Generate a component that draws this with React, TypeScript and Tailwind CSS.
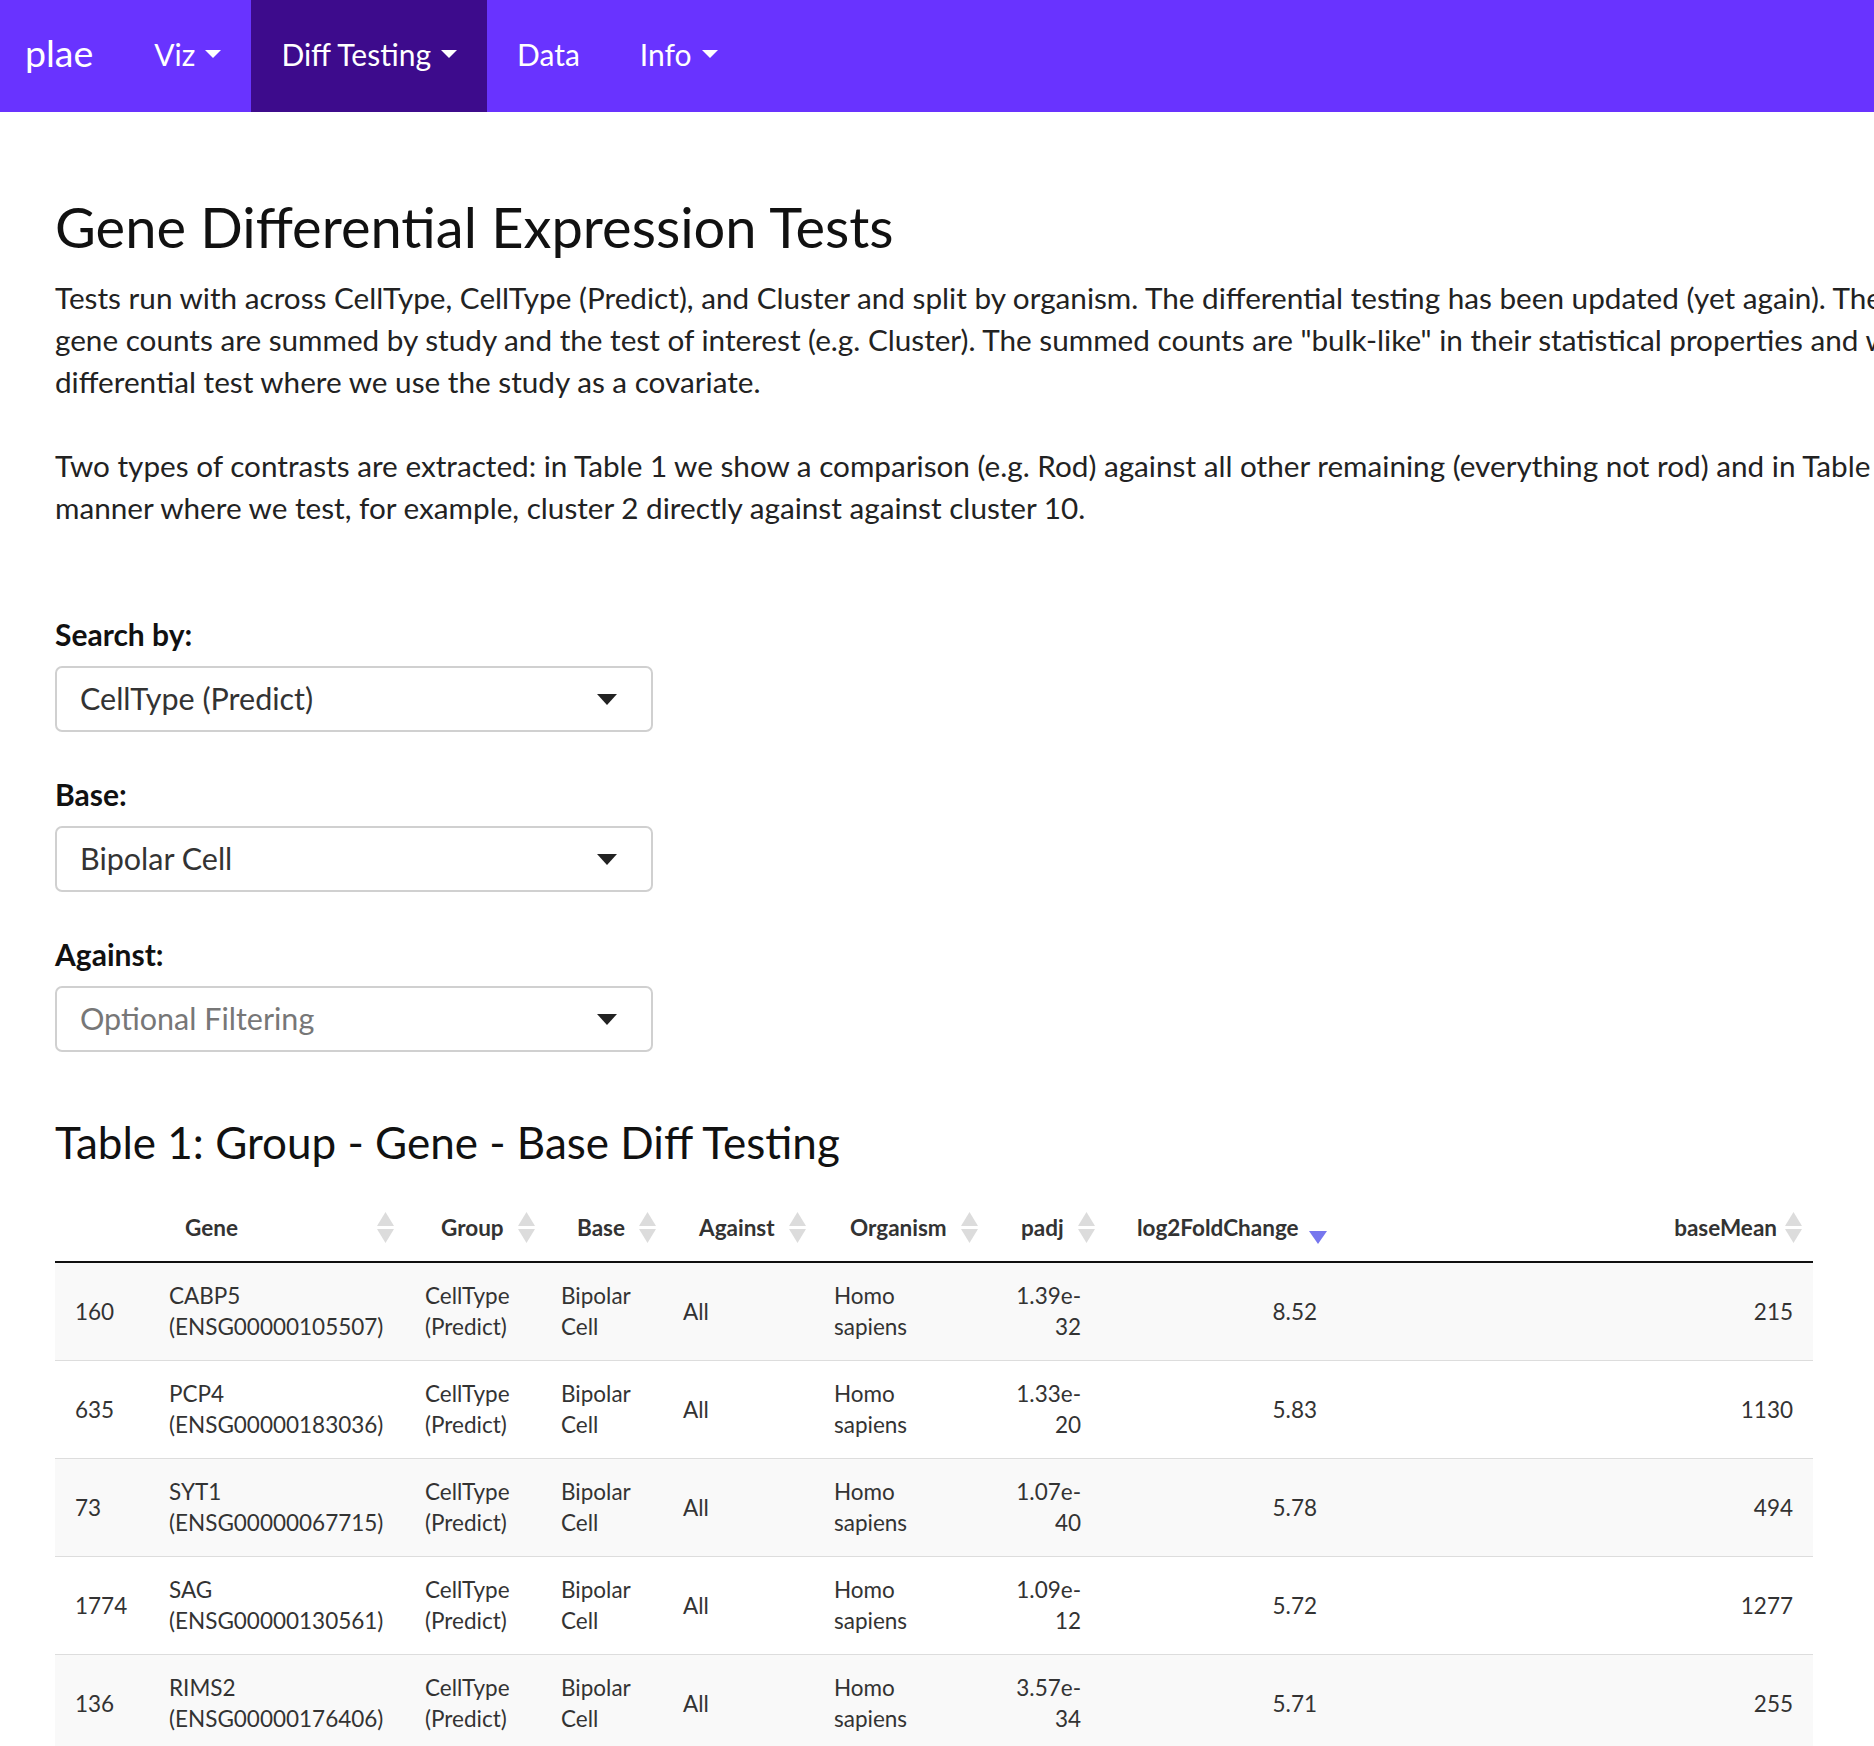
const rows = [
  { idx: "160", gene: "CABP5", ens: "(ENSG00000105507)", padj: ["1.39e-", "32"], fc: "8.52", mean: "215" },
  { idx: "635", gene: "PCP4", ens: "(ENSG00000183036)", padj: ["1.33e-", "20"], fc: "5.83", mean: "1130" },
  { idx: "73", gene: "SYT1", ens: "(ENSG00000067715)", padj: ["1.07e-", "40"], fc: "5.78", mean: "494" },
  { idx: "1774", gene: "SAG", ens: "(ENSG00000130561)", padj: ["1.09e-", "12"], fc: "5.72", mean: "1277" },
  { idx: "136", gene: "RIMS2", ens: "(ENSG00000176406)", padj: ["3.57e-", "34"], fc: "5.71", mean: "255" },
];

function Caret() {
  return (
    <span className="ml-[10px] inline-block h-0 w-0 border-x-[8px] border-t-[8px] border-x-transparent border-t-white" />
  );
}

function NavItem({ label, dropdown, active }: { label: string; dropdown?: boolean; active?: boolean }) {
  return (
    <div
      className={`flex items-center px-[30px] pb-[4px] text-[30px] text-white ${active ? "bg-[#3d0b8c]" : ""}`}
    >
      {label}
      {dropdown && <Caret />}
    </div>
  );
}

function SortIcon({ active }: { active?: boolean }) {
  if (active) {
    return (
      <svg width="18" height="32" viewBox="0 0 18 32" className="shrink-0">
        <polygon points="0,19 18,19 9,32" fill="#7676ee" />
      </svg>
    );
  }
  return (
    <svg width="17" height="31" viewBox="0 0 17 31" className="shrink-0">
      <polygon points="8.5,0 17,14 0,14" fill="#dcdcdc" />
      <polygon points="0,17 17,17 8.5,31" fill="#dcdcdc" />
    </svg>
  );
}

function Select({ value, placeholder }: { value: string; placeholder?: boolean }) {
  return (
    <div className="flex h-[66px] w-[598px] items-center justify-between rounded-[7px] border-2 border-[#d0d0d0] pl-[23px] pr-[34px]">
      <span className={`text-[30.5px] ${placeholder ? "text-[#777]" : "text-[#333]"}`}>{value}</span>
      <span className="inline-block h-0 w-0 border-x-[10px] border-t-[11px] border-x-transparent border-t-[#222]" />
    </div>
  );
}

function Th({ label, active, right }: { label: string; active?: boolean; right?: boolean }) {
  return (
    <th className="py-[17px] pr-[11px] pl-[36px] font-bold">
      <div className={`flex items-center ${right ? "justify-end gap-[8px]" : active ? "gap-[10px]" : "justify-between gap-[14px]"}`}>
        <span className="text-left">{label}</span>
        <SortIcon active={active} />
      </div>
    </th>
  );
}

export default function App() {
  return (
    <div className="min-h-screen w-full overflow-hidden bg-white font-['Lato',sans-serif] text-[#222]">
      <nav className="flex h-[112px] items-stretch bg-[#6933ff]">
        <div className="flex items-center pl-[25px] pr-[1px] pb-[6px] text-[37.5px] text-white">plae</div>
        <div className="flex items-stretch pl-[30px]">
          <NavItem label="Viz" dropdown />
          <NavItem label="Diff Testing" dropdown active />
          <NavItem label="Data" />
          <NavItem label="Info" dropdown />
        </div>
      </nav>

      <main className="pl-[55px]">
        <h1 className="mt-[81px] text-[56px] leading-[1.2] text-[#111]">Gene Differential Expression Tests</h1>

        <div className="mt-[17px] text-[29.7px] leading-[42px] whitespace-nowrap">
          <p>
            Tests run with across CellType, CellType (Predict), and Cluster and split by organism. The differential testing has been updated (yet again). The
            <br />
            gene counts are summed by study and the test of interest (e.g. Cluster). The summed counts are "bulk-like" in their statistical properties and we
            <br />
            differential test where we use the study as a covariate.
          </p>
          <p className="mt-[42px]">
            Two types of contrasts are extracted: in Table 1 we show a comparison (e.g. Rod) against all other remaining (everything not rod) and in Table 2
            <br />
            manner where we test, for example, cluster 2 directly against against cluster 10.
          </p>
        </div>

        <div className="mt-[84px] flex flex-col">
          <label className="text-[30px] leading-[42px] font-bold text-[#111]">Search by:</label>
          <div className="mt-[11px]">
            <Select value="CellType (Predict)" />
          </div>
          <label className="mt-[41px] text-[30px] leading-[42px] font-bold text-[#111]">Base:</label>
          <div className="mt-[11px]">
            <Select value="Bipolar Cell" />
          </div>
          <label className="mt-[41px] text-[30px] leading-[42px] font-bold text-[#111]">Against:</label>
          <div className="mt-[11px]">
            <Select value="Optional Filtering" placeholder />
          </div>
        </div>

        <h2 className="mt-[64px] text-[44px] leading-[1.2] text-[#111]">Table 1: Group - Gene - Base Diff Testing</h2>

        <table className="mt-[26px] w-[1758px] table-fixed border-collapse text-[22.5px] leading-[31px] text-[#333]">
          <colgroup>
            <col className="w-[94px]" />
            <col className="w-[256px]" />
            <col className="w-[136px]" />
            <col className="w-[122px]" />
            <col className="w-[151px]" />
            <col className="w-[171px]" />
            <col className="w-[116px]" />
            <col className="w-[236px]" />
            <col className="w-[476px]" />
          </colgroup>
          <thead>
            <tr className="border-b-2 border-[#111]">
              <th />
              <Th label="Gene" />
              <Th label="Group" />
              <Th label="Base" />
              <Th label="Against" />
              <Th label="Organism" />
              <Th label="padj" />
              <Th label="log2FoldChange" active />
              <Th label="baseMean" right />
            </tr>
          </thead>
          <tbody>
            {rows.map((r, i) => (
              <tr key={r.idx} className={`border-t border-[#ddd] ${i % 2 === 0 ? "bg-[#f9f9f9]" : "bg-white"}`}>
                <td className="px-[20px] py-[17.5px] align-middle">{r.idx}</td>
                <td className="px-[20px] py-[17.5px] align-middle">
                  {r.gene}
                  <br />
                  {r.ens}
                </td>
                <td className="px-[20px] py-[17.5px] align-middle">
                  CellType
                  <br />
                  (Predict)
                </td>
                <td className="px-[20px] py-[17.5px] align-middle">
                  Bipolar
                  <br />
                  Cell
                </td>
                <td className="px-[20px] py-[17.5px] align-middle">All</td>
                <td className="px-[20px] py-[17.5px] align-middle">
                  Homo
                  <br />
                  sapiens
                </td>
                <td className="px-[20px] py-[17.5px] text-right align-middle">
                  {r.padj[0]}
                  <br />
                  {r.padj[1]}
                </td>
                <td className="px-[20px] py-[17.5px] text-right align-middle">{r.fc}</td>
                <td className="px-[20px] py-[17.5px] text-right align-middle">{r.mean}</td>
              </tr>
            ))}
          </tbody>
        </table>
      </main>
    </div>
  );
}
